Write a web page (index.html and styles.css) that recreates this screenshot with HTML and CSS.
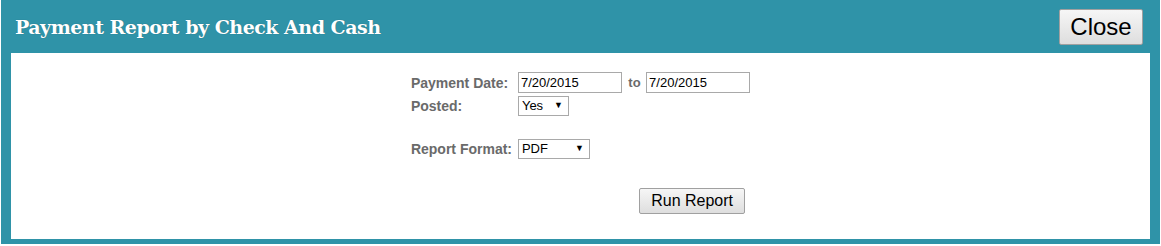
FILE: index.html
```html
<!DOCTYPE html>
<html lang="en">
<head>
    <meta charset="UTF-8">
    <title>Payment Report by Check And Cash</title>
    <link rel="stylesheet" href="styles.css">
</head>
<body>

    <div class="dialog">
        <div class="dialog-header">
            <h2 class="dialog-title">Payment Report by Check And Cash</h2>
            <button class="close-btn">Close</button>
        </div>

        <div class="dialog-body">
            <table class="report-form">
                <tr>
                    <td class="label">Payment Date:</td>
                    <td>
                        <input type="text" class="date-input" value="7/20/2015">
                        <span class="label to">to</span>
                        <input type="text" class="date-input" value="7/20/2015">
                    </td>
                </tr>
                <tr>
                    <td class="label">Posted:</td>
                    <td>
                        <span class="select-wrap">
                            <select class="posted-select">
                                <option>Yes</option>
                                <option>No</option>
                            </select>
                        </span>
                    </td>
                </tr>
                <tr class="spacer"><td colspan="2"></td></tr>
                <tr>
                    <td class="label">Report Format:</td>
                    <td>
                        <span class="select-wrap">
                            <select class="format-select">
                                <option>PDF</option>
                                <option>Excel</option>
                            </select>
                        </span>
                    </td>
                </tr>
                <tr>
                    <td colspan="2" class="actions">
                        <button class="run-btn">Run Report</button>
                    </td>
                </tr>
            </table>
        </div>
    </div>

</body>
</html>
```

FILE: styles.css
```css
body {
    margin: 0;
    font-family: "Liberation Sans", Arial, sans-serif;
    background-color: #fff;
}

.dialog {
    margin: 0 1px;
    height: 244px;
    background-color: #2f93a8;
    display: flex;
    flex-direction: column;
}

.dialog-header {
    height: 53px;
    display: flex;
    align-items: center;
    justify-content: space-between;
    padding: 0 17px 0 14px;
}

.dialog-title {
    margin: 0;
    color: #fff;
    font-family: "DejaVu Serif", "Liberation Serif", serif;
    font-size: 19px;
    font-weight: bold;
    letter-spacing: -0.5px;
    text-shadow: 0 0 1px rgba(0, 0, 0, 0.3);
}

.close-btn {
    width: 84px;
    height: 36px;
    margin-top: 1px;
    font-family: "Liberation Sans", Arial, sans-serif;
    font-size: 24px;
    color: #000;
    background: linear-gradient(#f6f6f6, #dedede);
    border: 1px solid #a0a0a0;
    border-radius: 2px;
    padding: 0;
}

.dialog-body {
    flex: 1;
    margin: 0 10px 5px 10px;
    background-color: #fff;
    display: flex;
    justify-content: center;
    padding-top: 18px;
}

.report-form {
    border-collapse: collapse;
    align-self: flex-start;
}

.report-form td {
    padding: 0;
    height: 23px;
    vertical-align: middle;
}

.label {
    color: #6a6a6a;
    font-size: 14px;
    font-weight: bold;
}

td.label {
    width: 107px;
}

.label.to {
    font-size: 13px;
    padding: 0 1px 0 2px;
}

.report-form tr.spacer td {
    height: 20px;
}

.date-input {
    width: 98px;
    height: 15px;
    padding: 2px;
    border: 1px solid #a9a9a9;
    font-family: "Liberation Sans", Arial, sans-serif;
    font-size: 13px;
    color: #000;
}

.select-wrap {
    position: relative;
    display: inline-block;
}

.select-wrap::after {
    content: "\25BC";
    position: absolute;
    right: 6px;
    top: 4px;
    font-size: 9px;
    color: #000;
    pointer-events: none;
}

select {
    appearance: none;
    -webkit-appearance: none;
    font-family: "Liberation Sans", Arial, sans-serif;
    font-size: 13px;
    color: #000;
    height: 20px;
    padding: 0 0 0 3px;
    border: 1px solid #a9a9a9;
    border-radius: 0;
    background-color: #fff;
    vertical-align: middle;
}

.posted-select {
    width: 51px;
}

.format-select {
    width: 72px;
}

.report-form td.actions {
    text-align: right;
    padding-top: 28px;
    padding-right: 5px;
}

.run-btn {
    width: 106px;
    height: 26px;
    font-family: "Liberation Sans", Arial, sans-serif;
    font-size: 16px;
    color: #000;
    background: linear-gradient(#f6f6f6, #dedede);
    border: 1px solid #a0a0a0;
    border-radius: 2px;
    padding: 0;
}
```
